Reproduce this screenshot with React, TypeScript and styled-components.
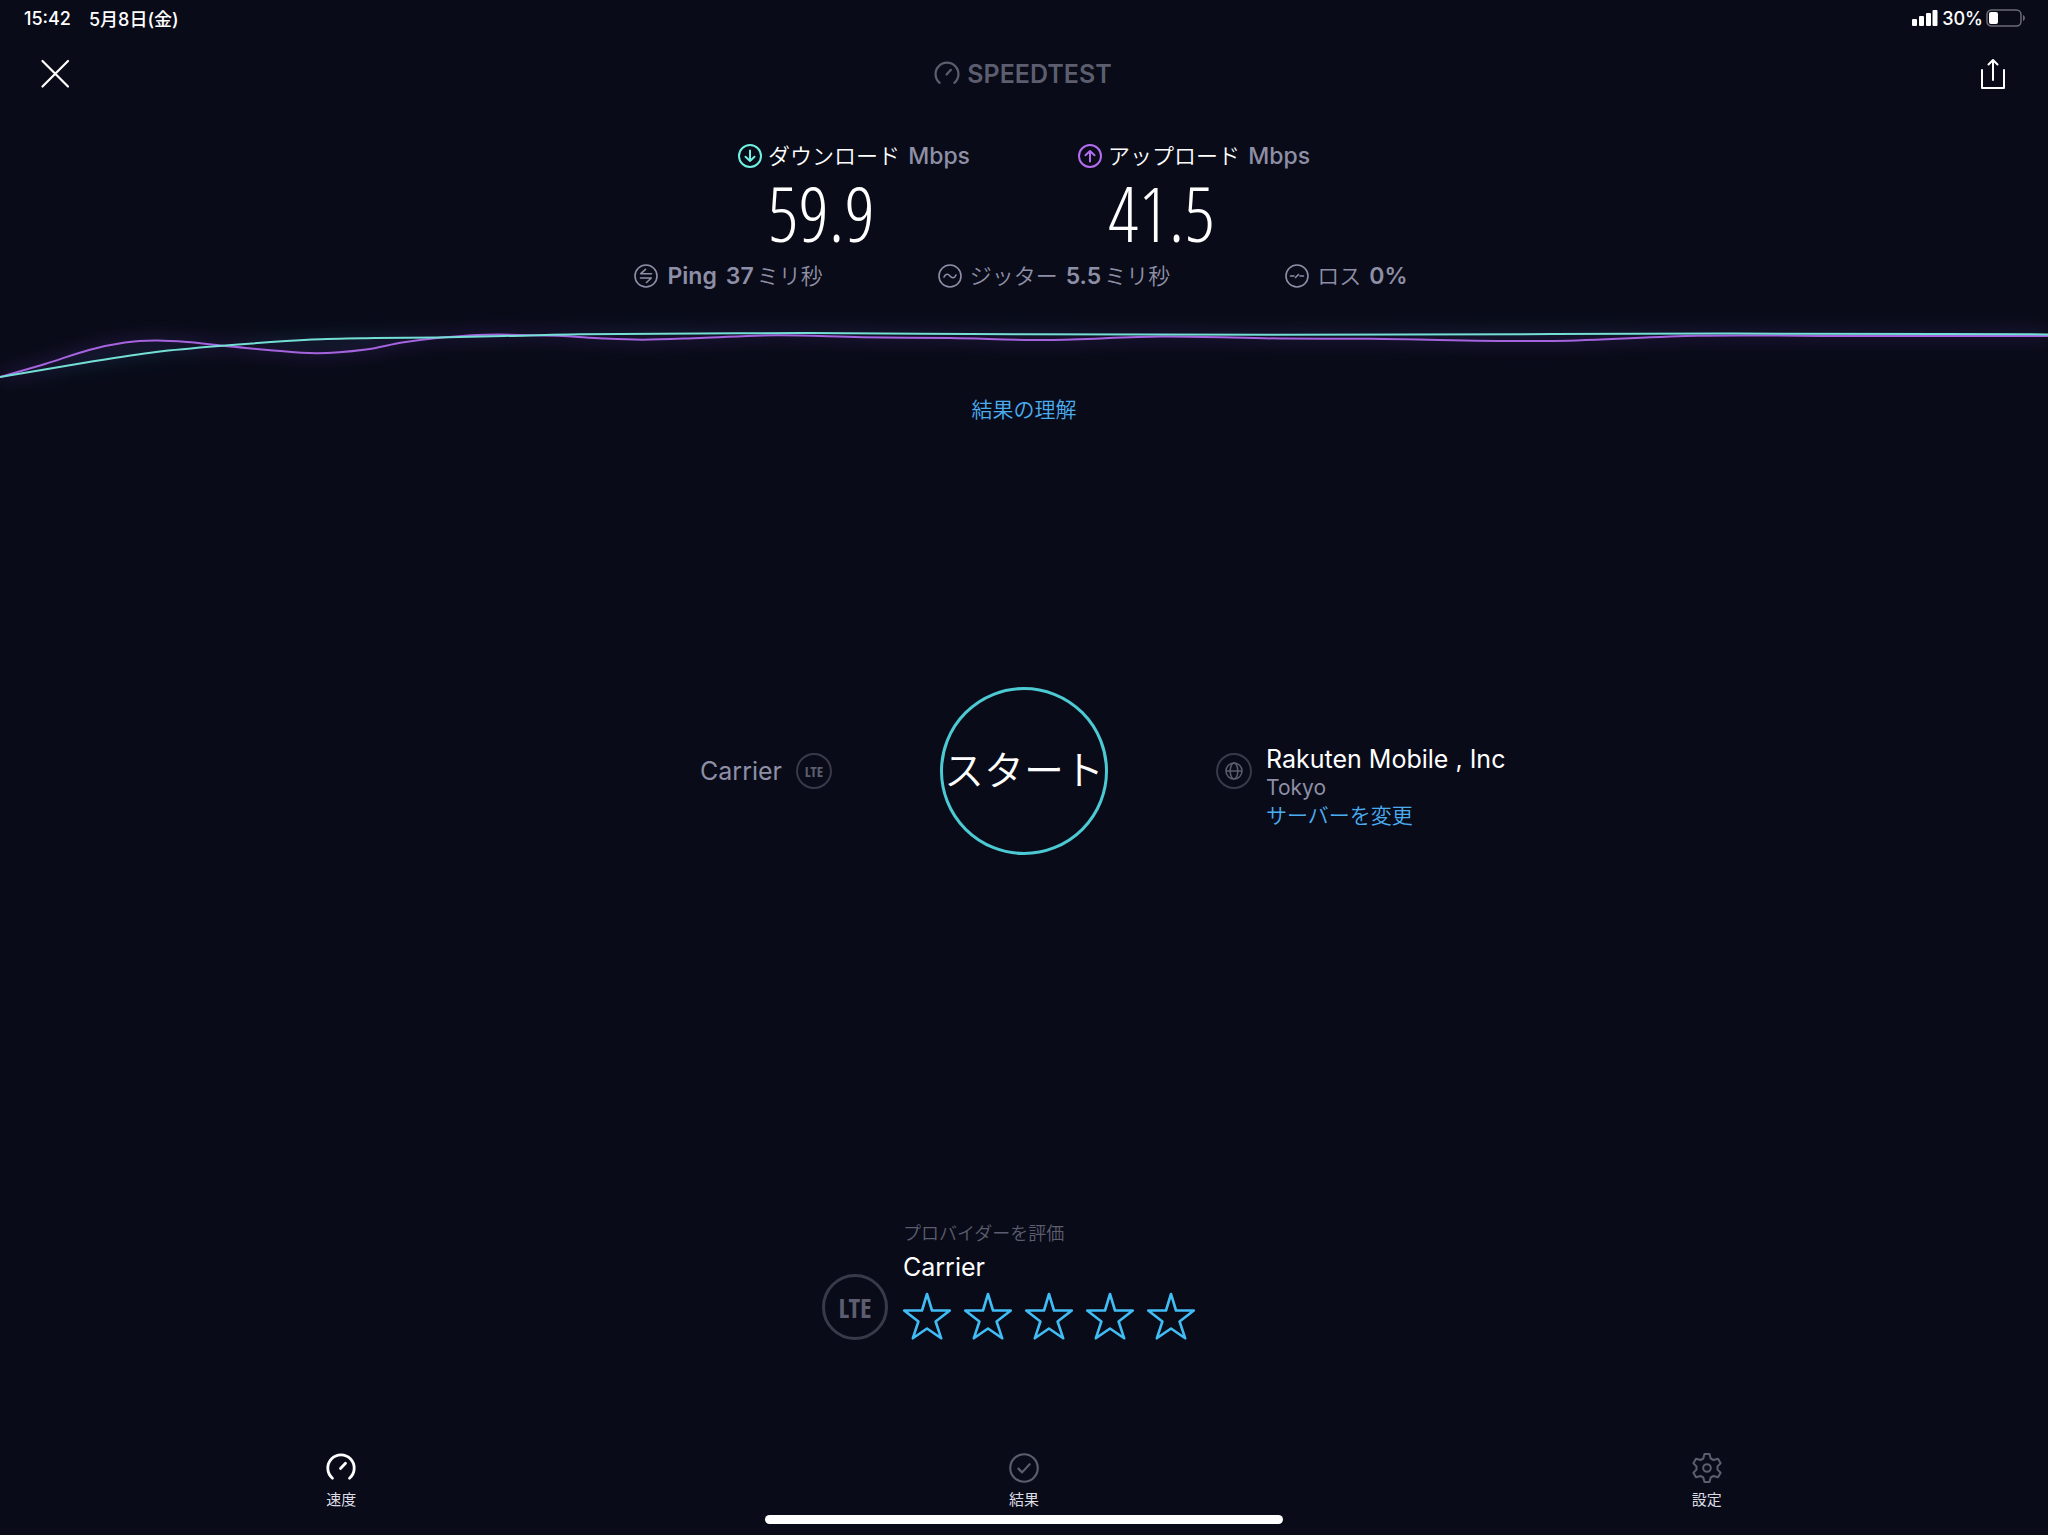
import React from "react";
import styled, { createGlobalStyle } from "styled-components";

const colors = {
  bg: "#090b18",
  white: "#ffffff",
  muted: "#8e8fa6",
  dim: "#5c5d6e",
  ring: "#383a49",
  link: "#4bacf0",
  star: "#41bdf5",
  cyan: "#6ff0e0",
  purple: "#b46cf0",
};

const GlobalStyle = createGlobalStyle`
  *, *::before, *::after { box-sizing: border-box; }
  body {
    margin: 0;
    background: ${colors.bg};
    color: ${colors.white};
    font-family: Inter, "Noto Sans CJK JP", sans-serif;
  }
  button { font: inherit; color: inherit; background: none; border: 0; padding: 0; cursor: pointer; }
  a { text-decoration: none; }
  svg { display: block; flex: none; }
`;

const Page = styled.div`
  min-height: 100vh;
  display: flex;
  flex-direction: column;
`;

const StatusBar = styled.div`
  display: flex;
  justify-content: space-between;
  align-items: center;
  height: 36px;
  padding: 0 22px 0 24px;
  font-size: 18px;
  font-weight: 500;
`;

const StatusGroup = styled.div<{ $gap: number }>`
  display: flex;
  align-items: center;
  gap: ${(p) => p.$gap}px;
`;

const Header = styled.header`
  display: grid;
  grid-template-columns: 1fr auto 1fr;
  align-items: center;
  height: 76px;
  padding: 0 40px;
`;

const IconButton = styled.button<{ $end?: boolean }>`
  justify-self: ${(p) => (p.$end ? "end" : "start")};
`;

const Brand = styled.h1`
  display: flex;
  align-items: center;
  gap: 7px;
  margin: 0;
  padding-right: 2px;
  color: ${colors.dim};
  font-size: 25px;
  line-height: 32px;
  font-weight: 600;
`;

const Metrics = styled.section`
  display: flex;
  justify-content: center;
  gap: 108px;
  padding-top: 28px;
`;

const MetricLabel = styled.div`
  display: flex;
  align-items: center;
  gap: 6px;
  font-size: 22px;
  line-height: 32px;
  font-weight: 350;
`;

const Unit = styled.span`
  margin-left: 2px;
  color: ${colors.muted};
  font-size: 23px;
  font-weight: 500;
`;

const MetricValue = styled.div`
  padding: 0 0 6px 30px;
  font-family: "Open Sans Condensed Light", "Open Sans Condensed", sans-serif;
  font-size: 76px;
  line-height: 82px;
  font-weight: 300;
`;

const Details = styled.section`
  display: flex;
  justify-content: center;
  gap: 115px;
  padding-right: 6px;
  color: ${colors.muted};
  font-size: 22px;
  line-height: 32px;
`;

const Detail = styled.div<{ $gap?: number }>`
  display: flex;
  align-items: center;
  gap: ${(p) => p.$gap ?? 8}px;
`;

const Strong = styled.span`
  font-size: 23px;
  font-weight: 600;
`;

const Light = styled.span`
  font-weight: 350;
`;

const Reading = styled.span`
  display: flex;
  align-items: center;
  gap: 3px;
`;

const Chart = styled.svg`
  width: 100%;
  height: 90px;
  margin-top: 18px;
  overflow: visible;
`;

const TextLink = styled.a`
  color: ${colors.link};
  font-size: 21px;
  line-height: 28px;
  font-weight: 350;
`;

const LinkRow = styled.div`
  display: flex;
  justify-content: center;
  margin-top: -4px;
`;

const Launch = styled.main`
  flex: 1;
  display: grid;
  grid-template-columns: 1fr auto 1fr;
  align-items: center;
  column-gap: 108px;
  padding-top: 6px;
`;

const StartButton = styled.button`
  width: 168px;
  height: 168px;
  border: 3px solid #4cc9d2;
  border-radius: 50%;
  padding-bottom: 6px;
  font-size: 40px;
  font-weight: 350;
  white-space: nowrap;
  display: flex;
  align-items: center;
  justify-content: center;
`;

const Carrier = styled.div`
  display: flex;
  align-items: center;
  justify-content: flex-end;
  gap: 14px;
  color: ${colors.muted};
  font-size: 25px;
  line-height: 30px;
`;

const Ring = styled.span<{ $size: number }>`
  flex: none;
  display: flex;
  align-items: center;
  justify-content: center;
  width: ${(p) => p.$size}px;
  height: ${(p) => p.$size}px;
  border: ${(p) => (p.$size > 40 ? 3 : 2)}px solid ${colors.ring};
  border-radius: 50%;
  color: ${colors.dim};
  font-family: "Open Sans Condensed", Roboto, sans-serif;
  font-size: ${(p) => (p.$size > 40 ? 27 : 15)}px;
  font-weight: 700;
`;

const Server = styled.div`
  display: flex;
  align-items: center;
  gap: 14px;
  height: 168px;
`;

const ServerText = styled.div`
  display: flex;
  flex-direction: column;
  padding-top: 32px;
`;

const ServerName = styled.span`
  font-size: 25px;
  line-height: 30px;
`;

const City = styled.span`
  color: ${colors.muted};
  font-size: 21px;
  line-height: 28px;
`;

const Rating = styled.section`
  display: flex;
  justify-content: center;
  align-items: flex-end;
  gap: 15px;
  padding: 108px 31px 0 0;
`;

const RatingBody = styled.div`
  display: flex;
  flex-direction: column;
`;

const RatingHint = styled.span`
  color: ${colors.dim};
  font-size: 18px;
  line-height: 28px;
  font-weight: 350;
`;

const RatingName = styled.span`
  font-size: 25px;
  line-height: 38px;
`;

const Stars = styled.div`
  display: flex;
  gap: 13px;
  padding-top: 6px;
`;

const Tabs = styled.nav`
  display: grid;
  grid-template-columns: repeat(3, 1fr);
  margin-top: 113px;
`;

const Tab = styled.button<{ $active?: boolean }>`
  display: flex;
  flex-direction: column;
  align-items: center;
  gap: 5px;
  color: #dcdce4;
  font-size: 15px;
  line-height: 24px;
  svg { color: ${(p) => (p.$active ? colors.white : colors.dim)}; }
`;

const HomeIndicator = styled.div`
  width: 25.25%;
  height: 9px;
  margin: 3px auto 11px;
  border-radius: 5px;
  background: ${colors.white};
`;

type Point = [number, number];

const download: Point[] = [
  [0, 67], [89, 52], [156, 42], [219, 36], [312, 29.5], [375, 28], [437, 27.5], [504, 26],
  [580, 24.3], [700, 23.6], [810, 23], [1024, 24.3], [1400, 24.6], [1720, 23.6], [2048, 24.4],
];

const upload: Point[] = [
  [0, 67], [45, 54], [89, 40], [125, 32.5], [156, 30.5], [187, 32], [223, 35.7], [268, 40],
  [317, 43.3], [366, 39.5], [402, 32.5], [437, 28], [487, 24.7], [558, 25.8], [603, 28.5],
  [643, 29.7], [700, 28], [777, 25.3], [862, 27.3], [950, 28], [1048, 30], [1162, 26.5],
  [1280, 28.5], [1371, 28.8], [1554, 31], [1698, 25.8], [1850, 26], [2048, 26],
];

function smooth(points: Point[]) {
  let d = `M${points[0][0]} ${points[0][1]}`;
  for (let i = 0; i < points.length - 1; i++) {
    const p0 = points[Math.max(i - 1, 0)];
    const p1 = points[i];
    const p2 = points[i + 1];
    const p3 = points[Math.min(i + 2, points.length - 1)];
    const span = (p2[0] - p1[0]) / 3;
    const m1 = (p2[1] - p0[1]) / (p2[0] - p0[0]);
    const m2 = (p3[1] - p1[1]) / (p3[0] - p1[0]);
    d += `C${p1[0] + span} ${p1[1] + m1 * span} ${p2[0] - span} ${p2[1] - m2 * span} ${p2[0]} ${p2[1]}`;
  }
  return d;
}

function SpeedChart() {
  const up = smooth(upload);
  const down = smooth(download);
  return (
    <Chart viewBox="0 0 2048 90" preserveAspectRatio="none" fill="none" aria-hidden="true">
      <defs>
        <filter id="glow" x="-5%" y="-60%" width="110%" height="220%">
          <feGaussianBlur stdDeviation="8" />
        </filter>
      </defs>
      <g filter="url(#glow)" strokeWidth="12" opacity="0.14">
        <path d={down} stroke="#2b7fa8" />
        <path d={up} stroke="#7c3fd0" />
      </g>
      <path d={up} stroke="#a563de" strokeWidth="2" />
      <path d={down} stroke="#74dfd6" strokeWidth="2" />
    </Chart>
  );
}

const Round = ({ size = 24, color = "currentColor", width = 2, children }: {
  size?: number; color?: string; width?: number; children: React.ReactNode;
}) => (
  <svg width={size} height={size} viewBox="0 0 24 24" fill="none" stroke={color} strokeWidth={width}
    strokeLinecap="round" strokeLinejoin="round" aria-hidden="true">
    <circle cx="12" cy="12" r="11" />
    {children}
  </svg>
);

const Gauge = ({ size, width }: { size: number; width: number }) => (
  <svg width={size} height={size} viewBox="0 0 30 30" fill="none" stroke="currentColor" strokeWidth={width}
    strokeLinecap="round" aria-hidden="true">
    <path d="M6.500 25.200A13.200 13.200 0 1 1 23.500 25.200" />
    <path d="M14.500 15.500L19.500 10.200" />
  </svg>
);

const Star = () => (
  <svg width="48" height="48" viewBox="0 0 48 48" fill="none" stroke={colors.star} strokeWidth="2.600"
    strokeLinejoin="round" aria-hidden="true">
    <path d="M24 2L29 18.5H46.8L32.6 29.5L38.2 46.3L24 36.5L9.8 46.3L15.4 29.5L1.2 18.5H19Z" />
  </svg>
);

export default function App() {
  return (
    <>
      <GlobalStyle />
      <Page>
        <StatusBar>
          <StatusGroup $gap={18}>
            <span>15:42</span>
            <span>5月8日(金)</span>
          </StatusGroup>
          <StatusGroup $gap={3}>
            <svg width="27" height="16" viewBox="0 0 27 16" fill="#fff" aria-hidden="true">
              <rect x="0" y="9" width="5" height="7" rx="1" />
              <rect x="7" y="6" width="5" height="10" rx="1" />
              <rect x="14" y="3" width="5" height="13" rx="1" />
              <rect x="20.500" y="0" width="5" height="16" rx="1" />
            </svg>
            <span>30%</span>
            <svg width="40" height="18" viewBox="0 0 40 18" fill="none" aria-hidden="true">
              <rect x="1" y="1" width="34" height="16" rx="4.500" stroke="#6a6b76" strokeWidth="1.5" />
              <rect x="3" y="3" width="9" height="12" rx="2" fill="#fff" />
              <path d="M37 6C39.500 7 39.500 11 37 12Z" fill="#6a6b76" />
            </svg>
          </StatusGroup>
        </StatusBar>

        <Header>
          <IconButton aria-label="閉じる">
            <svg width="30" height="30" viewBox="0 0 30 30" stroke="#fff" strokeWidth="2.2" strokeLinecap="round">
              <path d="M2.500 2L28 27.500M28 2L2.500 27.500" />
            </svg>
          </IconButton>
          <Brand>
            <Gauge size={26} width={2.6} />
            SPEEDTEST
          </Brand>
          <IconButton $end aria-label="共有">
            <svg width="30" height="32" viewBox="0 0 30 32" fill="none" stroke="#fff" strokeWidth="2" strokeLinecap="round" strokeLinejoin="round">
              <path d="M4 12V30H26V12" />
              <path d="M15 22V2M10.500 6.500L15 2L19.500 6.500" />
            </svg>
          </IconButton>
        </Header>

        <Metrics>
          <div>
            <MetricLabel>
              <Round color={colors.cyan}><path d="M12 6.500V17M7.500 12.800L12 17L16.500 12.800" /></Round>
              <span>ダウンロード <Unit>Mbps</Unit></span>
            </MetricLabel>
            <MetricValue>59.9</MetricValue>
          </div>
          <div>
            <MetricLabel>
              <Round color={colors.purple}><path d="M12 17.500V7M7.500 11.200L12 7L16.500 11.200" /></Round>
              <span>アップロード <Unit>Mbps</Unit></span>
            </MetricLabel>
            <MetricValue>41.5</MetricValue>
          </div>
        </Metrics>

        <Details>
          <Detail $gap={9}>
            <Round width={1.6}><path d="M17.500 9.700H6.800L11.500 5.300M6.500 14H17.300L12.500 18.500" /></Round>
            <Strong>Ping</Strong>
            <Reading><Strong>37</Strong><Light>ミリ秒</Light></Reading>
          </Detail>
          <Detail>
            <Round width={1.6}><path d="M6 13C7.500 9.500 10 9.500 12 12S16.500 14.500 18 11" /></Round>
            <Light>ジッター</Light>
            <Reading><Strong>5.5</Strong><Light>ミリ秒</Light></Reading>
          </Detail>
          <Detail>
            <Round width={1.6}><path d="M5.500 12H9M10.500 13.500L13.500 10.500M15 12H18.500" /></Round>
            <Light>ロス</Light>
            <Strong>0%</Strong>
          </Detail>
        </Details>

        <SpeedChart />

        <LinkRow>
          <TextLink href="#results">結果の理解</TextLink>
        </LinkRow>

        <Launch>
          <Carrier>
            <span>Carrier</span>
            <Ring $size={36}>LTE</Ring>
          </Carrier>
          <StartButton>スタート</StartButton>
          <Server>
            <Ring $size={36}>
              <svg width="18" height="18" viewBox="0 0 18 18" fill="none" stroke="currentColor" strokeWidth="1.5">
                <circle cx="9" cy="9" r="8" />
                <ellipse cx="9" cy="9" rx="3.800" ry="8" />
                <path d="M1 9H17" />
              </svg>
            </Ring>
            <ServerText>
              <ServerName>Rakuten Mobile , Inc</ServerName>
              <City>Tokyo</City>
              <TextLink href="#servers">サーバーを変更</TextLink>
            </ServerText>
          </Server>
        </Launch>

        <Rating>
          <Ring $size={66}>LTE</Ring>
          <RatingBody>
            <RatingHint>プロバイダーを評価</RatingHint>
            <RatingName>Carrier</RatingName>
            <Stars>
              {[1, 2, 3, 4, 5].map((n) => (
                <button key={n} aria-label={`${n}`}><Star /></button>
              ))}
            </Stars>
          </RatingBody>
        </Rating>

        <Tabs>
          <Tab $active>
            <Gauge size={30} width={2.8} />
            速度
          </Tab>
          <Tab>
            <Round size={30} width={1.7}><path d="M7.500 12.500L10.500 15.500L16.500 9" /></Round>
            結果
          </Tab>
          <Tab>
            <svg width="30" height="30" viewBox="0 0 30 30" fill="none" stroke="currentColor" strokeWidth="2" strokeLinejoin="round" aria-hidden="true">
              <path d="M12.500 1H17.500L18.700 5.500L21.500 7L26 5.800L28.600 10.200L25.500 13.400V16.600L28.600 19.800L26 24.200L21.500 23L18.700 24.500L17.500 29H12.500L11.300 24.500L8.500 23L4 24.200L1.400 19.800L4.500 16.600V13.400L1.400 10.200L4 5.800L8.500 7L11.300 5.500Z" />
              <circle cx="15" cy="15" r="3.800" />
            </svg>
            設定
          </Tab>
        </Tabs>
        <HomeIndicator />
      </Page>
    </>
  );
}
